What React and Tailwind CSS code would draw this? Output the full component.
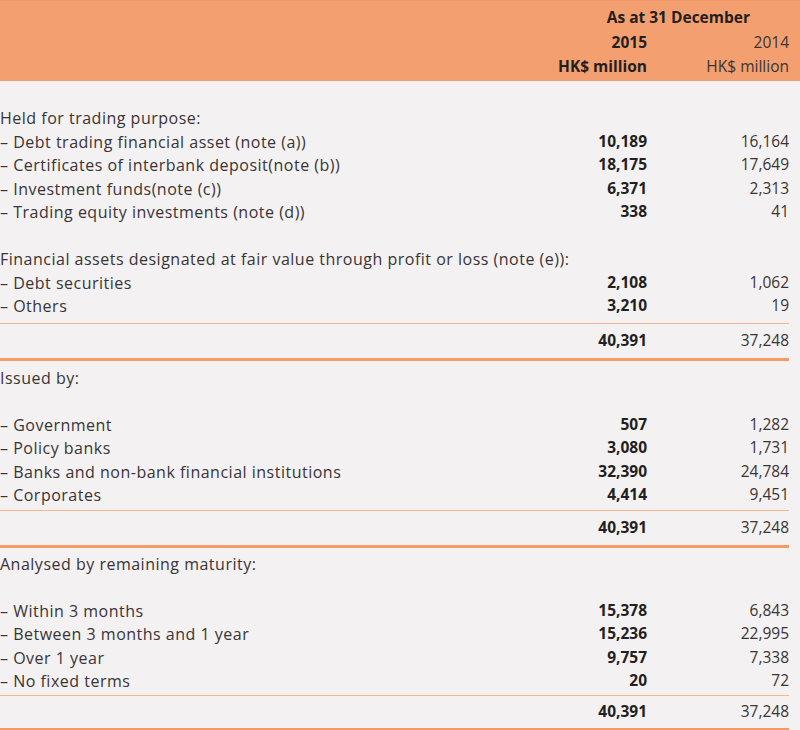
import React from "react";

const Row = ({ label, a, b }) => (
  <div className="grid grid-cols-[1fr_142px_142px] h-[23.5px] items-center">
    <div className="whitespace-nowrap tracking-[0.5px] text-[16px]">{label}</div>
    <div className="text-right font-bold text-[#231f20]">{a}</div>
    <div className="text-right">{b}</div>
  </div>
);

const Total = ({ a, b, last }) => (
  <div
    className={
      last
        ? "grid grid-cols-[1fr_142px_142px] h-[36px] items-center border-t border-[#f6b690] border-b-[3px] border-b-[#f39b66]"
        : "grid grid-cols-[1fr_142px_142px] h-[38px] items-center border-t border-[#f6b690] border-b-[3px] border-b-[#f39b66]"
    }
  >
    <div></div>
    <div className="text-right font-bold text-[#231f20]">{a}</div>
    <div className="text-right">{b}</div>
  </div>
);

export default function App() {
  return (
    <div
      className="w-[800px] h-[730px] bg-[#f3f1f2] text-[#3a3435] text-[15.5px] overflow-hidden"
      style={{ fontFamily: '"Open Sans", "Noto Sans", sans-serif' }}
    >
      <div className="bg-[#f49f70] h-[81px] pt-[4px] pr-[11px] border-t border-[#f2966a]">
        <div className="h-[26px] flex items-center justify-end pr-[39px] font-bold text-[#231f20]">
          As at 31 December
        </div>
        <div className="grid grid-cols-[1fr_142px_142px] h-[24px] items-center">
          <div></div>
          <div className="text-right font-bold text-[#231f20]">2015</div>
          <div className="text-right">2014</div>
        </div>
        <div className="grid grid-cols-[1fr_142px_142px] h-[24px] items-center">
          <div></div>
          <div className="text-right font-bold text-[#231f20]">HK$ million</div>
          <div className="text-right">HK$ million</div>
        </div>
      </div>

      <div className="pr-[11px]">
        <div className="pt-[25px] pb-[5px]">
          <Row label="Held for trading purpose:" />
          <Row label="– Debt trading financial asset (note (a))" a="10,189" b="16,164" />
          <Row label="– Certificates of interbank deposit(note (b))" a="18,175" b="17,649" />
          <Row label="– Investment funds(note (c))" a="6,371" b="2,313" />
          <Row label="– Trading equity investments (note (d))" a="338" b="41" />
          <Row label="" />
          <Row label="Financial assets designated at fair value through profit or loss (note (e)):" />
          <Row label="– Debt securities" a="2,108" b="1,062" />
          <Row label="– Others" a="3,210" b="19" />
        </div>
        <Total a="40,391" b="37,248" />

        <div className="pt-[5px] pb-[3px]">
          <Row label="Issued by:" />
          <Row label="" />
          <Row label="– Government" a="507" b="1,282" />
          <Row label="– Policy banks" a="3,080" b="1,731" />
          <Row label="– Banks and non-bank financial institutions" a="32,390" b="24,784" />
          <Row label="– Corporates" a="4,414" b="9,451" />
        </div>
        <Total a="40,391" b="37,248" />

        <div className="pt-[4px] pb-[2px]">
          <Row label="Analysed by remaining maturity:" />
          <Row label="" />
          <Row label="– Within 3 months" a="15,378" b="6,843" />
          <Row label="– Between 3 months and 1 year" a="15,236" b="22,995" />
          <Row label="– Over 1 year" a="9,757" b="7,338" />
          <Row label="– No fixed terms" a="20" b="72" />
        </div>
        <Total a="40,391" b="37,248" last />
      </div>
    </div>
  );
}
